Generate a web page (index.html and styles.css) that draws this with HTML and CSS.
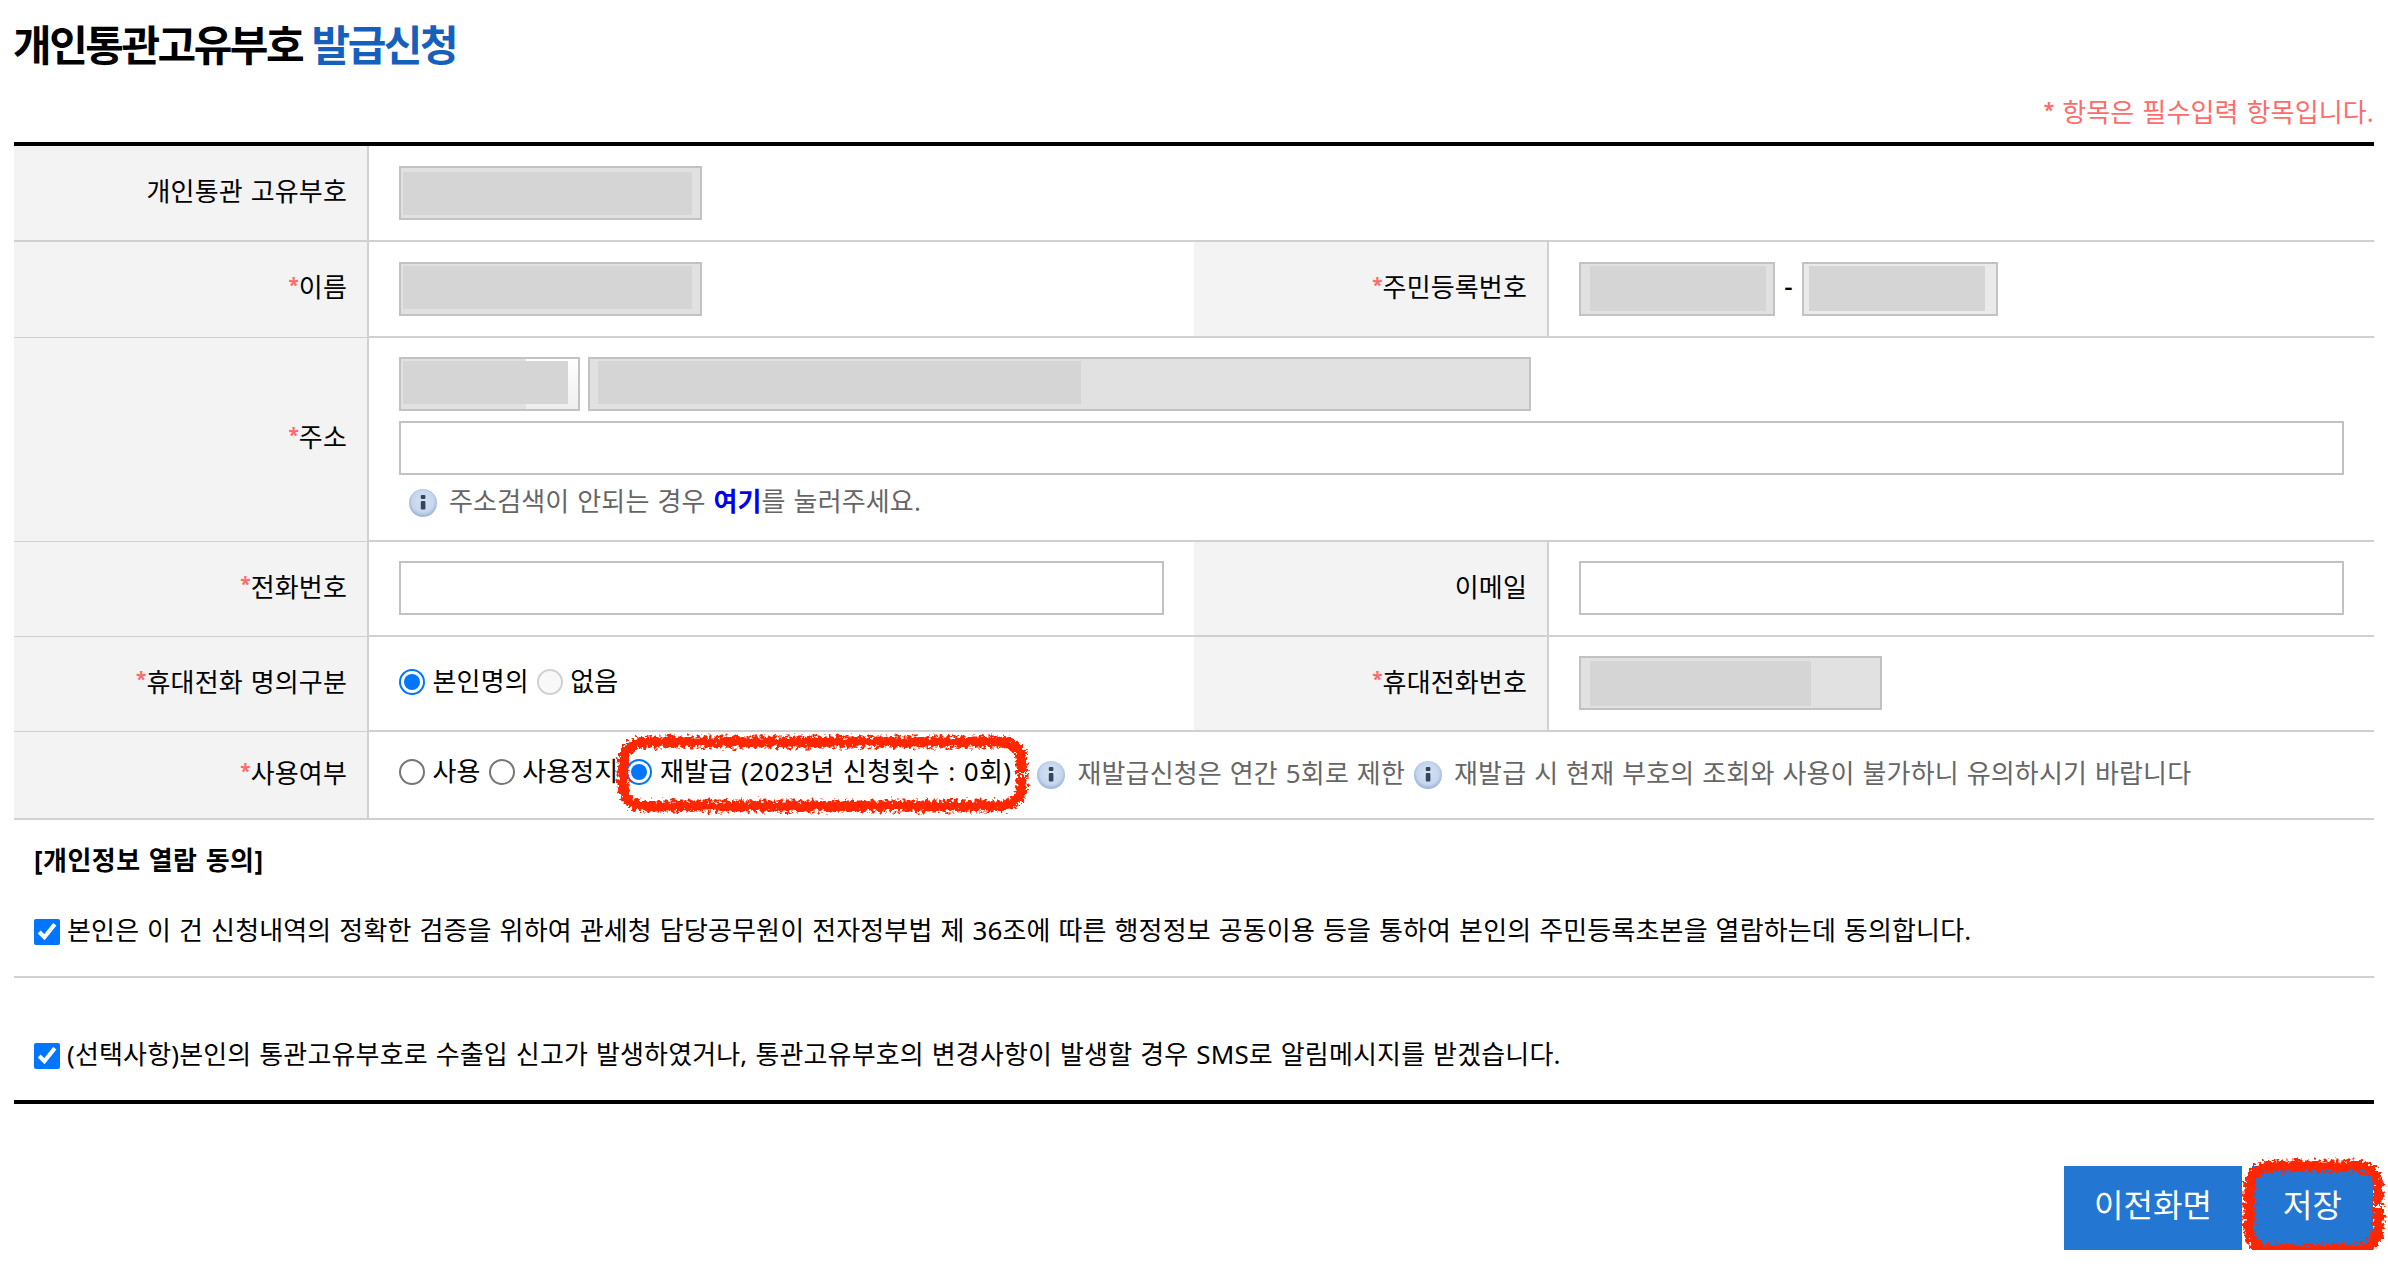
FILE: index.html
```html
<!DOCTYPE html>
<html lang="ko">
<head>
    <meta charset="UTF-8">
    <meta name="viewport" content="width=device-width, initial-scale=1.0">
    <title>개인통관고유부호 발급신청</title>
    <link rel="stylesheet" href="styles.css">
</head>
<body>
    <svg width="0" height="0" class="defs">
        <defs>
            <radialGradient id="infoFill" cx="50%" cy="45%" r="52%">
                <stop offset="0" stop-color="#d6e2f4"/>
                <stop offset="0.75" stop-color="#c6d6ed"/>
                <stop offset="1" stop-color="#9fb8db"/>
            </radialGradient>
            <filter id="rough" x="-10%" y="-20%" width="120%" height="140%">
                <feTurbulence type="fractalNoise" baseFrequency="0.28" numOctaves="3" seed="4"/>
                <feDisplacementMap in="SourceGraphic" scale="12" xChannelSelector="R" yChannelSelector="G"/>
            </filter>
            <symbol id="info" viewBox="0 0 28 28">
                <circle cx="14" cy="14" r="14" fill="url(#infoFill)"/>
                <rect x="11.8" y="6" width="4.6" height="4" rx="1" fill="#34455c"/>
                <rect x="11.8" y="12" width="4.6" height="8.5" rx="1" fill="#34455c"/>
            </symbol>
        </defs>
    </svg>

    <div class="container">
        <h2>개인통관고유부호 <span>발급신청</span></h2>
        <p class="required-note"><em>*</em> 항목은 필수입력 항목입니다.</p>

        <form id="applyForm">
            <div class="row">
                <div class="label thick">개인통관 고유부호</div>
                <div class="cell">
                    <div class="field code"><div class="mask"></div></div>
                </div>
            </div>
            <div class="row">
                <div class="label"><em>*</em>이름</div>
                <div class="cell">
                    <div class="field name"><div class="mask"></div></div>
                </div>
                <div class="label thick"><em>*</em>주민등록번호</div>
                <div class="cell">
                    <div class="field regno"><div class="mask"></div></div>
                    <span class="dash">-</span>
                    <div class="field regno light"><div class="mask"></div></div>
                </div>
            </div>
            <div class="row address">
                <div class="label"><em>*</em>주소</div>
                <div class="cell">
                    <div class="line">
                        <div class="field zip"><div class="mask"></div></div>
                        <div class="field road"><div class="mask"></div></div>
                    </div>
                    <input type="text" class="text" name="detail">
                    <p class="info"><svg><use href="#info"/></svg><span>주소검색이 안되는 경우 <a>여기</a>를 눌러주세요.</span></p>
                </div>
            </div>
            <div class="row short">
                <div class="label"><em>*</em>전화번호</div>
                <div class="cell"><input type="text" class="text" name="tel"></div>
                <div class="label thick">이메일</div>
                <div class="cell"><input type="text" class="text" name="email"></div>
            </div>
            <div class="row short">
                <div class="label"><em>*</em>휴대전화 명의구분</div>
                <div class="cell">
                    <label class="radio"><input type="radio" name="owner" checked>본인명의</label>
                    <label class="radio"><input type="radio" name="owner" disabled>없음</label>
                </div>
                <div class="label thick"><em>*</em>휴대전화번호</div>
                <div class="cell">
                    <div class="field mobile"><div class="mask"></div></div>
                </div>
            </div>
            <div class="row use">
                <div class="label thick"><em>*</em>사용여부</div>
                <div class="cell">
                    <label class="radio"><input type="radio" name="use">사용</label>
                    <label class="radio"><input type="radio" name="use">사용정지</label>
                    <div class="marked reissue">
                        <label class="radio"><input type="radio" name="use" checked>재발급 (2023년 신청횟수 : 0회)</label>
                        <svg class="marker" viewBox="0 0 414 82"><path d="M407 42 V50 Q407 72 383 72 H32 Q8 72 8 50 V30 Q8 8 32 8 H383 Q407 8 407 30 V39"/></svg>
                    </div>
                    <p class="info first"><svg><use href="#info"/></svg><span>재발급신청은 연간 5회로 제한</span></p>
                    <p class="info"><svg><use href="#info"/></svg><span>재발급 시 현재 부호의 조회와 사용이 불가하니 유의하시기 바랍니다</span></p>
                </div>
            </div>

            <div class="agree">
                <h3>[개인정보 열람 동의]</h3>
                <label class="check"><input type="checkbox" checked>본인은 이 건 신청내역의 정확한 검증을 위하여 관세청 담당공무원이 전자정부법 제 36조에 따른 행정정보 공동이용 등을 통하여 본인의 주민등록초본을 열람하는데 동의합니다.</label>
            </div>
            <div class="agree sms">
                <label class="check"><input type="checkbox" checked>(선택사항)본인의 통관고유부호로 수출입 신고가 발생하였거나, 통관고유부호의 변경사항이 발생할 경우 SMS로 알림메시지를 받겠습니다.</label>
            </div>

            <div class="buttons">
                <button type="button">이전화면</button>
                <div class="marked">
                    <button type="submit">저장</button>
                    <svg class="marker" viewBox="0 0 142 98"><path d="M136 50 V68 Q136 92 112 92 H31 Q7 92 7 68 V32 Q7 8 31 8 H112 Q136 8 136 32 V47"/></svg>
                </div>
            </div>
        </form>
    </div>
</body>
</html>
```

FILE: styles.css
```css
* {
    box-sizing: border-box;
}
body {
    margin: 0;
    background-color: #fff;
    color: #000;
    font-family: "Noto Sans", "Noto Sans CJK KR", sans-serif;
    font-size: 26px;
    line-height: 36px;
    letter-spacing: 0.15px;
    word-spacing: 1px;
    white-space: nowrap;
}
.defs {
    position: absolute;
}
.container {
    width: 2360px;
    margin-left: 14px;
}
h2 {
    height: 92px;
    margin: 0 0 0 -1px;
    padding-top: 15px;
    font-size: 42px;
    line-height: 60px;
    letter-spacing: -2.5px;
}
h2 span {
    color: #1560bd;
}
em {
    font-size: 19px;
    font-style: normal;
    font-weight: bold;
    color: #ff6b6b;
}
.required-note {
    height: 50px;
    margin: 0;
    padding-top: 2px;
    text-align: right;
    color: #ff6b6b;
}
.required-note em {
    line-height: 1;
    vertical-align: 5px;
}
form {
    border-top: 4px solid #000;
}
.row {
    display: flex;
    height: 96px;
}
.row.address {
    height: 204px;
}
.row.short {
    height: 95px;
}
.row.use {
    height: 88px;
}
.label {
    display: flex;
    align-items: center;
    justify-content: flex-end;
    width: 355px;
    flex: none;
    padding-right: 20px;
    padding-bottom: 5px;
    background-color: #f3f3f3;
    border-right: 2px solid #d0d0d0;
    border-bottom: 1px solid #d0d0d0;
}
.label.thick {
    padding-bottom: 4px;
    border-bottom-width: 2px;
}
.label em {
    padding-bottom: 5px;
}
.cell {
    display: flex;
    align-items: center;
    flex: 1;
    padding: 0 30px;
    border-bottom: 2px solid #d0d0d0;
}
.short .cell {
    padding-bottom: 1px;
}
.field {
    display: flex;
    height: 54px;
    padding: 2px;
    background-color: #e1e1e1;
    border: 2px solid #c2c2c2;
}
.mask {
    height: 43px;
    background-color: #d5d5d5;
}
.code, .name {
    width: 303px;
}
.code .mask, .name .mask {
    width: 289px;
}
.code .mask {
    margin-top: 2px;
}
.regno {
    width: 196px;
    padding-left: 9px;
}
.regno .mask {
    width: 176px;
    height: 45px;
}
.regno.light {
    padding-left: 5px;
    background-color: #eaeaea;
}
.dash {
    width: 27px;
    padding-bottom: 6px;
    text-align: center;
    font-weight: 500;
}
.address .cell {
    flex-direction: column;
    align-items: stretch;
    padding-top: 19px;
}
.line {
    display: flex;
    gap: 8px;
    margin-bottom: 10px;
}
.zip {
    width: 181px;
    background: linear-gradient(#e1e1e1, #e1e1e1) left / 125px 100% no-repeat, linear-gradient(#fff, #eee);
}
.zip .mask {
    width: 165px;
}
.road {
    width: 943px;
    padding-left: 8px;
}
.road .mask {
    width: 483px;
}
.mobile {
    width: 303px;
    padding: 3px 9px;
}
.mobile .mask {
    width: 221px;
    height: 45px;
}
.text {
    width: 100%;
    height: 54px;
    flex: none;
    padding: 0 10px;
    border: 2px solid #c2c2c2;
    background-color: #fff;
    font: inherit;
}
.info {
    display: flex;
    margin: 0;
    color: #666;
}
.info svg {
    width: 28px;
    height: 28px;
    flex: none;
    margin-top: 6px;
    margin-right: 12px;
}
.info + .info {
    margin-left: 9px;
}
.info a {
    color: #0000ee;
    font-weight: bold;
}
.address .info {
    margin-top: 8px;
    margin-left: 10px;
}
.radio {
    display: flex;
    align-items: center;
    margin-right: 8px;
    margin-bottom: 4px;
}
.radio input {
    display: grid;
    place-content: center;
    appearance: none;
    width: 26px;
    height: 26px;
    margin: 1px 7.5px 0 0;
    border: 2px solid #767676;
    border-radius: 50%;
    background-color: #fff;
}
.radio input:checked {
    border-color: #0075ff;
}
.radio input:checked::before {
    content: "";
    width: 16px;
    height: 16px;
    border-radius: 50%;
    background-color: #0075ff;
}
.radio input:disabled {
    border-color: #d1d1d1;
    background-color: #f8f8f8;
}
.use .cell {
    padding-bottom: 4px;
}
.marked {
    position: relative;
}
.marker {
    position: absolute;
    overflow: visible;
}
.marker path {
    fill: none;
    stroke: #ff2600;
    stroke-width: 11;
    filter: url(#rough);
}
.reissue {
    width: 411px;
}
.reissue .radio {
    letter-spacing: 0.4px;
}
.reissue .marker {
    left: -11px;
    top: -19px;
    width: 414px;
    height: 82px;
}
.agree {
    height: 158px;
    padding: 22px 20px 0;
    border-bottom: 2px solid #d0d0d0;
}
.agree h3 {
    margin: 0 0 34px;
    font-size: 26px;
    line-height: 36px;
    letter-spacing: 0.45px;
}
.agree.sms {
    height: 126px;
    padding-top: 58px;
    border-bottom: 4px solid #000;
}
.check {
    display: flex;
}
.check input {
    width: 26px;
    height: 26px;
    flex: none;
    margin: 7px 7px 0 0;
    accent-color: #0075ff;
}
.buttons {
    display: flex;
    justify-content: flex-end;
    gap: 10px;
    padding: 62px 1px 0 0;
}
.buttons button {
    display: block;
    width: 178px;
    height: 84px;
    padding: 0 0 10px;
    border: none;
    background-color: #2376d2;
    color: #fff;
    font-family: inherit;
    font-size: 32px;
}
.buttons .marked button {
    width: 121px;
}
.buttons .marker {
    left: -10px;
    top: -8px;
    width: 142px;
    height: 98px;
}
```
